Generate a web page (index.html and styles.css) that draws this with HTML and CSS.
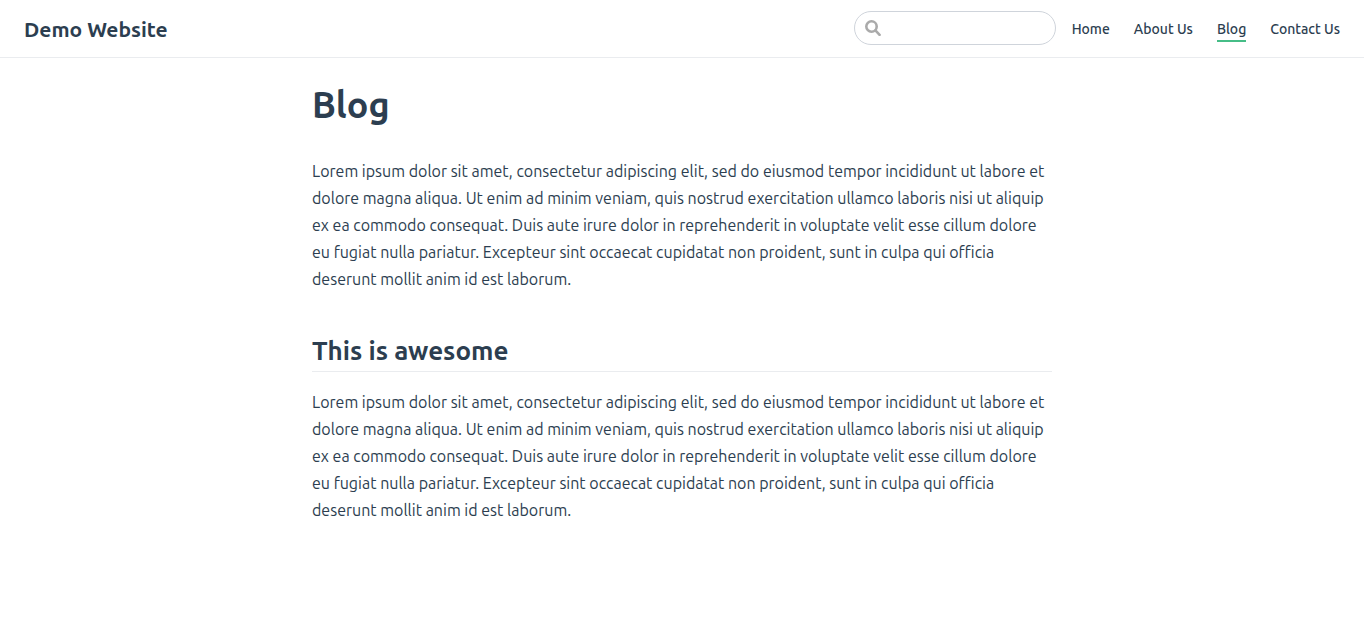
FILE: index.html
```html
<!DOCTYPE html>
<html lang="en-US">
<head>
<meta charset="utf-8">
<meta name="viewport" content="width=device-width, initial-scale=1">
<title>Blog | Demo Website</title>
<link rel="stylesheet" href="styles.css">
</head>
<body>
<header class="navbar">
  <a class="site-name" href="#">Demo Website</a>
  <div class="links">
    <label class="search-box">
      <svg class="search-icon" viewBox="0 0 16 16" aria-hidden="true"><circle cx="6.5" cy="6.5" r="5.2"/><path d="M10.4 10.4L14.6 14.8"/></svg>
      <input class="search-input" type="text" aria-label="Search" autocomplete="off">
    </label>
    <nav class="nav-links">
      <a class="nav-link" href="#">Home</a>
      <a class="nav-link" href="#">About Us</a>
      <a class="nav-link active" href="#" aria-current="page">Blog</a>
      <a class="nav-link" href="#">Contact Us</a>
    </nav>
  </div>
</header>
<main class="content">
  <h1 class="title">Blog</h1>
  <p class="text">Lorem ipsum dolor sit amet, consectetur adipiscing elit, sed do eiusmod tempor incididunt ut labore et dolore magna aliqua. Ut enim ad minim veniam, quis nostrud exercitation ullamco laboris nisi ut aliquip ex ea commodo consequat. Duis aute irure dolor in reprehenderit in voluptate velit esse cillum dolore eu fugiat nulla pariatur. Excepteur sint occaecat cupidatat non proident, sunt in culpa qui officia deserunt mollit anim id est laborum.</p>
  <h2 class="subtitle">This is awesome</h2>
  <p class="text">Lorem ipsum dolor sit amet, consectetur adipiscing elit, sed do eiusmod tempor incididunt ut labore et dolore magna aliqua. Ut enim ad minim veniam, quis nostrud exercitation ullamco laboris nisi ut aliquip ex ea commodo consequat. Duis aute irure dolor in reprehenderit in voluptate velit esse cillum dolore eu fugiat nulla pariatur. Excepteur sint occaecat cupidatat non proident, sunt in culpa qui officia deserunt mollit anim id est laborum.</p>
</main>
</body>
</html>
```

FILE: styles.css
```css
* {
  box-sizing: border-box;
}

body {
  margin: 0;
  background: #fff;
  color: #2c3e50;
  font-family: Ubuntu, "Noto Sans", "Open Sans", sans-serif;
  font-size: 16px;
}

.navbar {
  display: flex;
  align-items: center;
  justify-content: space-between;
  padding: 11px 24px 12px;
  border-bottom: 1px solid #eaecef;
}

.site-name {
  padding-top: 2px;
  color: inherit;
  font-size: 21px;
  font-weight: 700;
  line-height: 32px;
  text-decoration: none;
}

.links {
  display: flex;
  align-items: center;
  gap: 16px;
}

.search-box {
  display: flex;
  align-items: center;
  width: 202px;
  height: 34px;
  padding: 0 10px;
  gap: 8px;
  border: 1px solid #cfd4db;
  border-radius: 17px;
}

.search-icon {
  flex: none;
  width: 16px;
  height: 16px;
  fill: none;
  stroke: #aaa;
  stroke-width: 2.6;
  stroke-linecap: round;
}

.search-input {
  flex: 1;
  min-width: 0;
  padding: 0;
  border: 0;
  outline: 0;
  background: transparent;
  color: inherit;
  font: inherit;
}

.nav-links {
  display: flex;
  gap: 24px;
}

.nav-link {
  padding-top: 4px;
  border-bottom: 2px solid transparent;
  color: inherit;
  font-size: 14px;
  font-weight: 500;
  line-height: 22px;
  text-decoration: none;
}

.nav-link.active {
  border-color: #46bd87;
}

.content {
  max-width: 740px;
  margin: 0 auto;
  padding-top: 24px;
}

.title {
  margin: 0 0 30px;
  font-size: 36px;
  font-weight: 700;
  line-height: 46px;
}

.text {
  margin: 0;
  line-height: 27px;
}

.subtitle {
  margin: 41px 0 17px;
  padding-bottom: 3px;
  border-bottom: 1px solid #eaecef;
  font-size: 26px;
  font-weight: 700;
  line-height: 34px;
}
```
